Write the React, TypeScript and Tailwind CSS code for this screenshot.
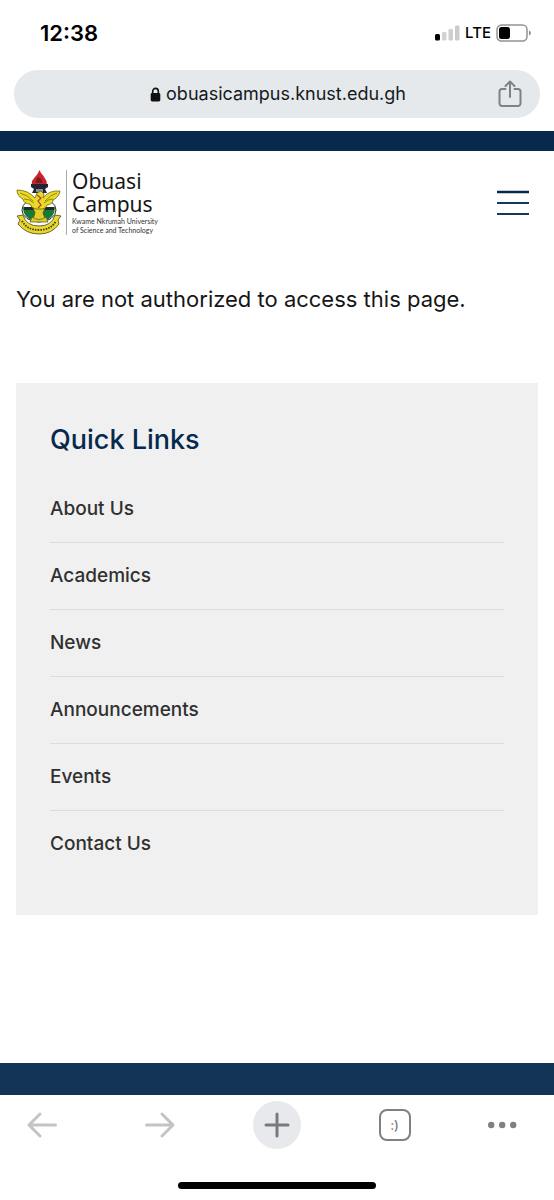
import React from 'react';

interface QuickLink {
  label: string;
  href: string;
}

const quickLinks: QuickLink[] = [
  { label: 'About Us', href: '#about' },
  { label: 'Academics', href: '#academics' },
  { label: 'News', href: '#news' },
  { label: 'Announcements', href: '#announcements' },
  { label: 'Events', href: '#events' },
  { label: 'Contact Us', href: '#contact' },
];

const StatusBar: React.FC = () => (
  <div className="flex h-[70px] items-center justify-between pl-10 pr-[22px] pb-1 text-black">
    <span className="text-[22px] leading-7 font-semibold">12:38</span>
    <div className="flex items-center gap-[5px]">
      <svg width="25" height="16" viewBox="0 0 25 16" aria-hidden="true">
        <rect x="0" y="9" width="5" height="6.5" rx="1.5" fill="#000" />
        <rect x="7" y="7" width="4.5" height="8.5" rx="1.2" fill="#d3d3d3" />
        <rect x="13.5" y="4" width="4.5" height="11.5" rx="1.2" fill="#cfcfcf" />
        <rect x="20" y="0.5" width="4.5" height="15" rx="1.2" fill="#cbcbcb" />
      </svg>
      <span className="text-[15px] leading-5 font-medium">LTE</span>
      <svg width="36" height="18" viewBox="0 0 36 18" aria-hidden="true">
        <rect x="1" y="1" width="30" height="16" rx="4.5" fill="#fff" stroke="#929292" strokeWidth="1.5" />
        <rect x="3" y="3" width="11" height="12" rx="2.5" fill="#000" />
        <path d="M33 6.5q2 .8 2 2.5t-2 2.5z" fill="#929292" />
      </svg>
    </div>
  </div>
);

const AddressBar: React.FC = () => (
  <div className="mx-3.5 flex h-12 items-center rounded-full bg-[#e5e9ec] px-[18px]">
    <div className="flex flex-1 items-center justify-center gap-[5px] pl-[26px] text-[#16191c]">
      <svg width="11" height="15" viewBox="0 0 11 15" aria-hidden="true">
        <path d="M2.7 7V4.2a2.8 2.8 0 0 1 5.6 0V7" fill="none" stroke="#111" strokeWidth="1.6" />
        <rect x="0.7" y="6" width="9.6" height="8.4" rx="1.4" fill="#111" />
      </svg>
      <span className="text-[18px] leading-6">obuasicampus.knust.edu.gh</span>
    </div>
    <button type="button" aria-label="Share">
      <svg width="24" height="28" viewBox="0 0 24 28" fill="none" stroke="#7d8287" strokeWidth="2" strokeLinecap="round" strokeLinejoin="round">
        <path d="M7.5 9H4a2.5 2.5 0 0 0-2.5 2.5v12A2.5 2.5 0 0 0 4 26h16a2.5 2.5 0 0 0 2.5-2.5v-12A2.5 2.5 0 0 0 20 9h-3.5M12 17V2M7.5 6 12 1.5 16.5 6" />
      </svg>
    </button>
  </div>
);

const Crest: React.FC = () => (
  <svg width="46" height="66" viewBox="0 0 46 66" aria-hidden="true">
    {/* flame and stool */}
    <path d="M23.5 0q1 3 4 6l3 5q1 3-1 5H17q-2-2-1-5l3-4q3-3 4.5-7z" fill="#c9232b" />
    <path d="M22 7q-3 3-2 6h6q1-3-2-5z" fill="#7e1a20" />
    <path d="M15 14h17v3l-3 2 2 4H16l2-4-3-2z" fill="#22242f" />
    <path d="M20 19h7v3h-7z" fill="#8b8f9c" />
    {/* pot */}
    <ellipse cx="23" cy="40" rx="17" ry="12" fill="#fff" stroke="#252b20" strokeWidth="1" />
    <path d="M7 37q16 6 32 0 0 13-16 15Q7 50 7 37z" fill="#167a3b" />
    <path d="M8 37h30v3H8z" fill="#202b20" />
    <path d="M17 38h12l-2 5 3 8H16l3-8z" fill="#e0cf2b" stroke="#4e4b12" strokeWidth=".8" />
    {/* eagle */}
    <path d="M1 20q11 0 18 8l2-5 4-2 3 3-1 4q6-8 17-7-1 6-7 9 0 4-6 5-1 4-5 4h-6q-5-1-6-5-6 0-7-5-6-3-6-9z" fill="#ebd927" stroke="#6d6517" strokeWidth=".8" />
    <path d="M4 23q8 2 13 8M8 29q6 0 10 4M41 23q-7 2-12 8M37 29q-5 0-9 4" fill="none" stroke="#918718" strokeWidth="1" />
    <path d="m21 25 4 3-3 3 3 4-3 3" fill="none" stroke="#a5442a" strokeWidth="1.2" />
    <path d="M16 47q7 5 14 0l2 5H14z" fill="#dfcb29" stroke="#57511a" strokeWidth=".7" />
    {/* motto ribbon */}
    <path d="m1 46 6-1q3 11 16 11t16-11l6 1-3 4 1 4q-7 10-20 10T2 54l2-4z" fill="#e8d72f" stroke="#5f591a" strokeWidth=".9" />
    <path d="M6 51q5 9 17 9t17-9" fill="none" stroke="#3c3912" strokeWidth="1.8" strokeDasharray="1.5 1.2" />
  </svg>
);

const SiteHeader: React.FC = () => (
  <header className="flex h-[103px] items-center justify-between border-t-[20px] border-[#06294d] box-content pl-4 pr-6">
    <a href="#home" className="flex items-center gap-1" aria-label="Obuasi Campus home">
      <Crest />
      <div className="border-l border-[#aaa] pl-[5px] text-[#161616]">
        <div className="font-['Noto_Sans',sans-serif] text-[21px] leading-[23px]">
          <div>Obuasi</div>
          <div>Campus</div>
        </div>
        <div className="mt-px font-['Lato',sans-serif] text-[7px] leading-[9px] text-[#333]">
          <div>Kwame Nkrumah University</div>
          <div>of Science and Technology</div>
        </div>
      </div>
    </a>
    <button type="button" aria-label="Open menu">
      <svg width="34" height="26" viewBox="0 0 34 26" stroke="#17375e" strokeWidth="2">
        <path d="M1 2h32" stroke="#06294d" strokeWidth="2.5" />
        <path d="M1 13h32M1 24h32" />
      </svg>
    </button>
  </header>
);

const QuickLinks: React.FC = () => (
  <nav className="bg-[#f0f0f0] px-[34px] pt-[39px] pb-[38px]" aria-labelledby="quick-links">
    <h2 id="quick-links" className="text-[27px] leading-9 font-medium text-[#06294d]">
      Quick Links
    </h2>
    <ul className="mt-[18px] divide-y divide-[#dcdcdc]">
      {quickLinks.map((link) => (
        <li key={link.href}>
          <a href={link.href} className="block py-5 text-[19px] leading-[26px] font-medium text-[#303030]">
            {link.label}
          </a>
        </li>
      ))}
    </ul>
  </nav>
);

const BrowserToolbar: React.FC = () => (
  <div className="bg-white">
    <div className="flex h-[60px] items-center justify-between px-[18px]">
      <button type="button" aria-label="Back" className="flex w-12 justify-center">
        <svg width="32" height="28" viewBox="0 0 32 28" fill="none" stroke="#c4c4c4" strokeWidth="3" strokeLinecap="round" strokeLinejoin="round">
          <path d="M29.5 14H3M14 3 3 14l11 11" />
        </svg>
      </button>
      <button type="button" aria-label="Forward" className="flex w-12 justify-center">
        <svg width="32" height="28" viewBox="0 0 32 28" fill="none" stroke="#c4c4c4" strokeWidth="3" strokeLinecap="round" strokeLinejoin="round">
          <path d="M2.5 14H29M18 3l11 11-11 11" />
        </svg>
      </button>
      <button type="button" aria-label="New tab" className="flex size-12 items-center justify-center rounded-full bg-[#e8e9ed]">
        <svg width="26" height="26" viewBox="0 0 26 26" stroke="#777b80" strokeWidth="3" strokeLinecap="round">
          <path d="M13 2v22M2 13h22" />
        </svg>
      </button>
      <button type="button" aria-label="Open tabs" className="flex w-12 justify-center">
        <span className="flex size-8 items-center justify-center rounded-lg border-2 border-[#7d8084] text-[13px] leading-4 font-medium text-[#777b80]">
          :)
        </span>
      </button>
      <button type="button" aria-label="More" className="flex w-12">
        <svg width="32" height="8" viewBox="0 0 32 8" fill="#7d8084">
          <circle cx="3.2" cy="4" r="3.2" />
          <circle cx="14.2" cy="4" r="3.2" />
          <circle cx="25.2" cy="4" r="3.2" />
        </svg>
      </button>
    </div>
    <div className="flex h-[45px] items-center justify-center pt-4">
      <div className="h-[7px] w-[198px] rounded-full bg-black" />
    </div>
  </div>
);

const App: React.FC = () => {
  return (
    <div className="flex min-h-screen flex-col bg-white font-['Inter','Liberation_Sans',sans-serif]">
      <StatusBar />
      <AddressBar />
      <div className="mt-[13px] flex flex-1 flex-col">
        <SiteHeader />
        <main className="flex-1 px-4 pt-[29px]">
          <p className="mb-[68px] text-[22px] leading-8 text-[#161616]">You are not authorized to access this page.</p>
          <QuickLinks />
        </main>
        <footer className="h-8 bg-[#143457]" />
      </div>
      <BrowserToolbar />
    </div>
  );
};

export default App;
